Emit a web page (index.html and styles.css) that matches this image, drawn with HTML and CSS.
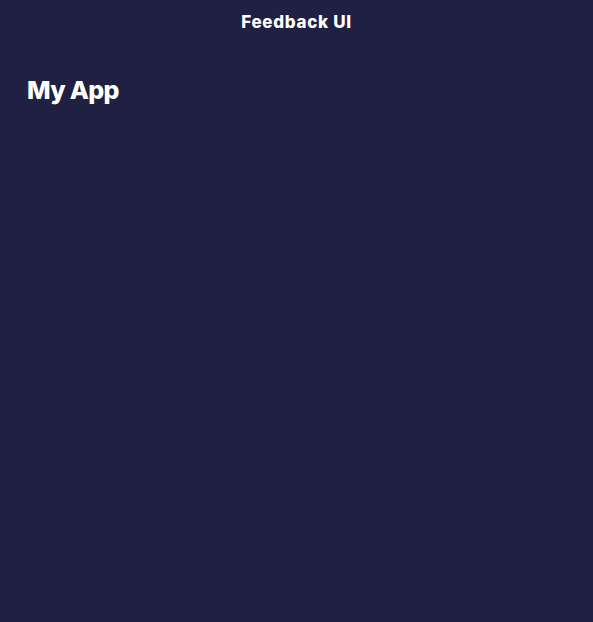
FILE: index.html
```html
<!DOCTYPE html>
<html lang="en">
<head>
<meta charset="utf-8">
<title>Feedback UI</title>
<link rel="stylesheet" href="styles.css">
</head>
<body>
<header class="topbar">
  <h2 class="topbar-title">Feedback UI</h2>
</header>
<main class="container">
  <h1 class="app-title">My App</h1>
</main>
</body>
</html>
```
FILE: styles.css
```css
* { box-sizing: border-box; }
html, body {
  margin: 0;
  padding: 0;
  height: 100%;
}
body {
  background: #202142;
  color: #ffffff;
  font-family: "Inter", "Noto Sans", sans-serif;
}
.topbar {
  height: 44px;
  display: flex;
  align-items: center;
  justify-content: center;
}
.topbar-title {
  margin: 0;
  font-size: 17px;
  font-weight: 800;
  letter-spacing: 0.7px;
}
.container {
  padding: 30px 27px;
}
.app-title {
  margin: 0;
  font-size: 25px;
  font-weight: 800;
  line-height: 32px;
  letter-spacing: -0.7px;
}
```
